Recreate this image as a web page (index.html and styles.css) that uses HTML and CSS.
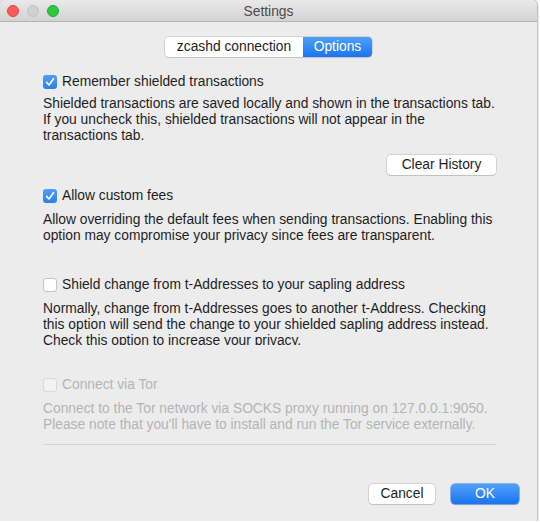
FILE: index.html
```html
<!DOCTYPE html>
<html>
<head>
<meta charset="utf-8">
<link rel="stylesheet" href="styles.css">
</head>
<body>
<div class="window">
  <div class="titlebar">
    <div class="lights">
      <span class="light red"></span>
      <span class="light gray"></span>
      <span class="light green"></span>
    </div>
    <div class="title">Settings</div>
  </div>
  <div class="content">
    <div class="tabs-wrap">
      <div class="tabs">
        <div class="tab">zcashd connection</div>
        <div class="tab active">Options</div>
      </div>
    </div>

    <div class="option first">
      <label class="check-row">
        <span class="box checked"><svg viewBox="0 0 14 14" width="14" height="14"><path d="M3.6 7.4 L6 10 L10.5 3.8" fill="none" stroke="#fff" stroke-width="1.7" stroke-linecap="round" stroke-linejoin="round"/></svg></span>
        <span>Remember shielded transactions</span>
      </label>
      <p class="desc tight">Shielded transactions are saved locally and shown in the transactions tab.<br>If you uncheck this, shielded transactions will not appear in the<br>transactions tab.</p>
      <div class="btn-row"><button class="btn clear">Clear History</button></div>
    </div>

    <div class="option second">
      <label class="check-row">
        <span class="box checked"><svg viewBox="0 0 14 14" width="14" height="14"><path d="M3.6 7.4 L6 10 L10.5 3.8" fill="none" stroke="#fff" stroke-width="1.7" stroke-linecap="round" stroke-linejoin="round"/></svg></span>
        <span>Allow custom fees</span>
      </label>
      <p class="desc">Allow overriding the default fees when sending transactions. Enabling this<br>option may compromise your privacy since fees are transparent.</p>
    </div>

    <div class="option third">
      <label class="check-row">
        <span class="box"></span>
        <span>Shield change from t-Addresses to your sapling address</span>
      </label>
      <p class="desc clipped">Normally, change from t-Addresses goes to another t-Address. Checking<br>this option will send the change to your shielded sapling address instead.<br>Check this option to increase your privacy.</p>
    </div>

    <div class="option fourth disabled">
      <label class="check-row">
        <span class="box"></span>
        <span>Connect via Tor</span>
      </label>
      <p class="desc">Connect to the Tor network via SOCKS proxy running on 127.0.0.1:9050.<br>Please note that you'll have to install and run the Tor service externally.</p>
      <div class="separator"></div>
    </div>

    <div class="footer">
      <button class="btn cancel">Cancel</button>
      <button class="btn ok">OK</button>
    </div>
  </div>
</div>
</body>
</html>
```
FILE: styles.css
```css
html, body {
  margin: 0;
  padding: 0;
  background: #ffffff;
}
body {
  font-family: "Liberation Sans", Arial, sans-serif;
  font-size: 13.8px;
  color: #1e1e1e;
}
.window {
  width: 537px;
  height: 521px;
  background: #ececec;
  border-radius: 5px 5px 0 0;
  box-shadow: 0 0 0 1px #c4c4c4, 1px 1px 2px rgba(0,0,0,0.35);
  overflow: hidden;
  display: flex;
  flex-direction: column;
}
.titlebar {
  height: 21px;
  border-bottom: 1px solid #b4b4b4;
  background: linear-gradient(#e9e9e9, #d3d3d3);
  display: flex;
  align-items: center;
  position: relative;
}
.lights {
  display: flex;
  gap: 8px;
  padding-left: 7px;
}
.light {
  width: 12px;
  height: 12px;
  border-radius: 50%;
  box-sizing: border-box;
}
.light.red { background: #fc5a56; border: 0.5px solid #e0443e; }
.light.gray { background: #d0d0d0; border: 0.5px solid #c2c2c2; }
.light.green { background: #2fc840; border: 0.5px solid #21a82f; }
.title {
  position: absolute;
  left: 0;
  right: 0;
  top: 0;
  line-height: 23px;
  text-align: center;
  color: #4b4b4b;
  font-size: 13.8px;
  pointer-events: none;
}
.content {
  padding: 15px 41px 0 43px;
  display: flex;
  flex-direction: column;
  flex: 1;
}
.tabs-wrap {
  display: flex;
  padding-left: 122px;
}
.tabs {
  display: flex;
  height: 20px;
  border-radius: 4px;
  background: #ffffff;
  box-shadow: 0 0 0 0.5px #b8b8b8, 0 1px 1px rgba(0,0,0,0.12);
  overflow: hidden;
}
.tab {
  line-height: 20px;
  font-size: 13.8px;
  color: #1e1e1e;
  text-align: center;
}
.tab:first-child { width: 138px; }
.tab.active {
  background: linear-gradient(#4fa0fb, #1a74ef);
  color: #ffffff;
  width: 69px;
}
.option { display: flex; flex-direction: column; }
.option.first { margin-top: 17px; }
.option.second { margin-top: 13px; }
.option.third { margin-top: 33px; }
.option.fourth { margin-top: 32px; }
.check-row {
  display: flex;
  align-items: center;
  gap: 5px;
  height: 16px;
  line-height: 16px;
}
.box {
  width: 14px;
  height: 14px;
  border-radius: 3px;
  box-sizing: border-box;
  background: #ffffff;
  border: 1px solid #c3c3c3;
  display: flex;
  flex-shrink: 0;
}
.box.checked {
  background: linear-gradient(#4d9efb, #2a7ff2);
  border: none;
}
.desc {
  margin: 8px 0 0 0;
  line-height: 16px;
  white-space: nowrap;
}
.desc.tight { margin-top: 6px; }
.desc.clipped {
  height: 44px;
  overflow: hidden;
}
.btn-row {
  display: flex;
  justify-content: flex-end;
  margin-top: 11px;
}
.btn {
  font-family: "Liberation Sans", Arial, sans-serif;
  font-size: 13.8px;
  height: 20px;
  line-height: 20px;
  padding: 0;
  border: none;
  border-radius: 4px;
  background: #ffffff;
  color: #1e1e1e;
  box-shadow: 0 0 0 0.5px #b8b8b8, 0 1px 1px rgba(0,0,0,0.15);
}
.btn.clear { width: 109px; }
.disabled { color: #b4b4b4; }
.disabled .box { border-color: #d8d8d8; background: #f2f2f2; }
.separator {
  height: 1px;
  background: #d6d6d6;
  margin-top: 11px;
}
.footer {
  display: flex;
  justify-content: flex-end;
  gap: 16px;
  margin-top: 39px;
  margin-right: -23px;
}
.btn.cancel { width: 66px; }
.btn.ok {
  width: 68px;
  color: #ffffff;
  background: linear-gradient(#4fa0fb, #1a74ef);
  box-shadow: 0 0 0 0.5px #2a78e6, 0 1px 1px rgba(0,0,0,0.15);
}
```
